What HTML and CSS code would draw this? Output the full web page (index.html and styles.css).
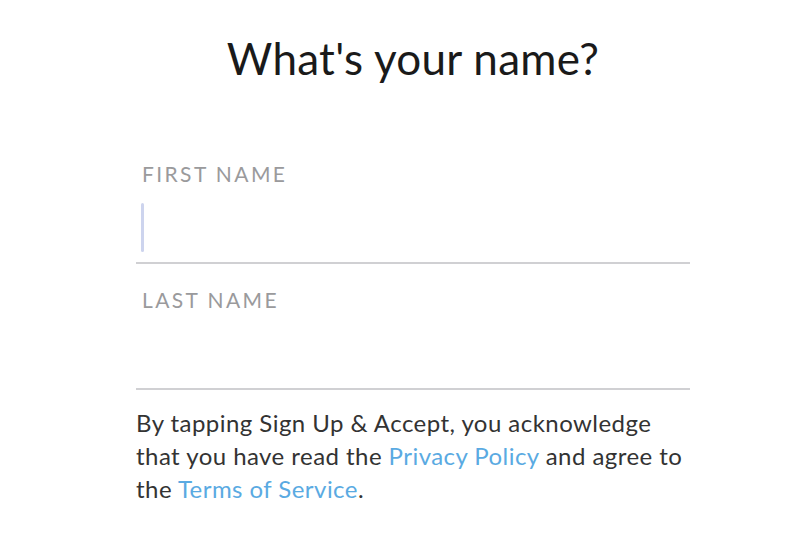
FILE: index.html
```html
<!DOCTYPE html>
<html>
<head>
<meta charset="utf-8">
<link rel="stylesheet" href="styles.css">
</head>
<body>
<main class="page">
  <h1 class="title">What's your name?</h1>
  <div class="fields">
    <div class="field">
      <label class="label">FIRST NAME</label>
      <div class="input"><span class="cursor"></span></div>
    </div>
    <div class="field">
      <label class="label">LAST NAME</label>
      <div class="input"></div>
    </div>
  </div>
  <p class="legal">By tapping Sign Up &amp; Accept, you acknowledge<br>that you have read the <a class="link">Privacy Policy</a> and agree to<br>the <a class="link">Terms of Service</a>.</p>
</main>
</body>
</html>
```
FILE: styles.css
```css
html, body {
  margin: 0;
  padding: 0;
  background: #fff;
}
body {
  font-family: Lato, "Noto Sans", sans-serif;
}
.page {
  width: 554px;
  margin-left: 136px;
  padding-top: 28px;
}
.title {
  margin: 0;
  text-align: center;
  font-size: 44px;
  font-weight: 400;
  color: #1a1a1a;
  line-height: 60px;
  letter-spacing: 0.3px;
}
.fields {
  margin-top: 50px;
}
.field {
  padding-top: 22px;
  border-bottom: 2px solid #d0d0d3;
}
.label {
  display: block;
  padding-left: 6px;
  font-size: 21px;
  letter-spacing: 2.4px;
  color: #9a9a9c;
  line-height: 28px;
}
.input {
  height: 74px;
  padding-top: 15px;
  padding-left: 5px;
  box-sizing: border-box;
}
.cursor {
  display: block;
  width: 3px;
  height: 49px;
  border-radius: 2px;
  background: #cdd4ee;
}
.legal {
  margin: 16px 0 0;
  font-size: 24px;
  line-height: 33px;
  letter-spacing: 0.45px;
  color: #333;
  white-space: nowrap;
}
.link {
  color: #5aaae2;
}
```
